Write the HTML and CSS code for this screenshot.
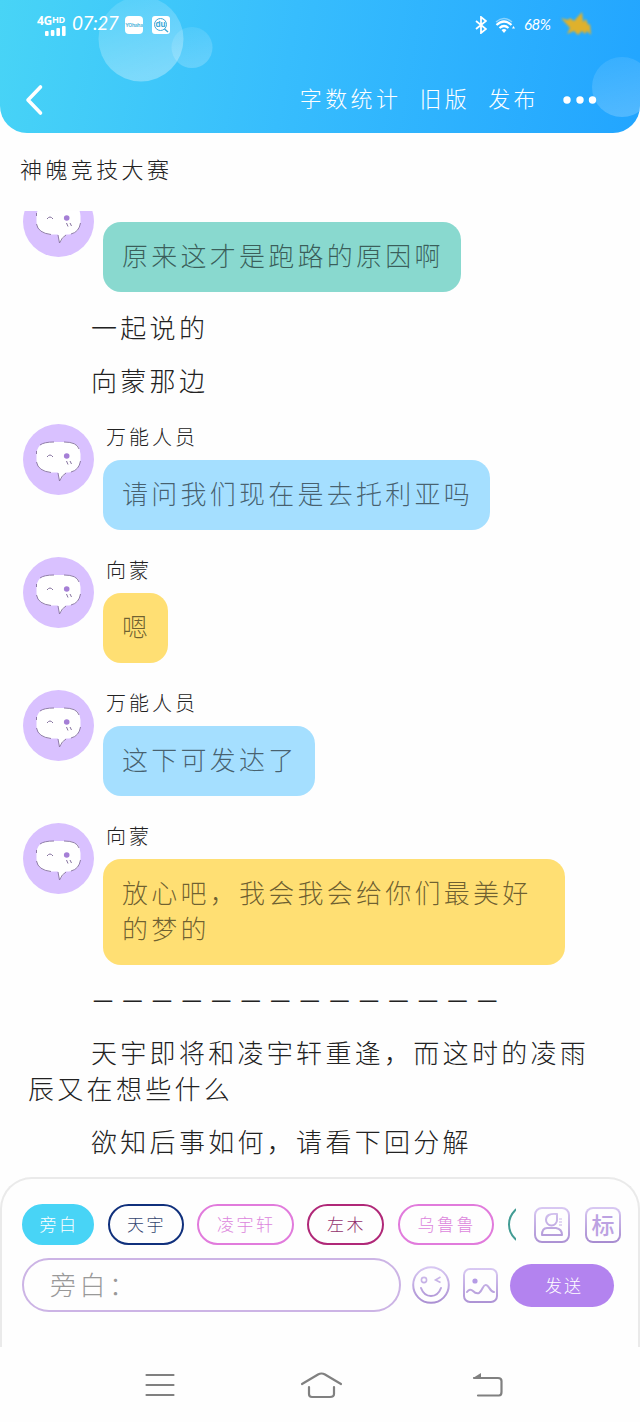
FILE: index.html
```html
<!DOCTYPE html>
<html lang="zh-CN">
<head>
<meta charset="utf-8">
<title>神魄竞技大赛</title>
<link rel="stylesheet" href="styles.css">
</head>
<body>
<svg class="defs" aria-hidden="true">
  <defs>
    <linearGradient id="violet" x1="0" y1="0" x2="0" y2="40" gradientUnits="userSpaceOnUse">
      <stop offset="0" stop-color="#d9c9f3"/><stop offset="1" stop-color="#a78bd0"/>
    </linearGradient>
    <symbol id="avatar" viewBox="0 0 71 71">
      <circle cx="35.5" cy="35.5" r="35.5" fill="#d9c1ff"/>
      <path d="M26 18H46Q57 19 57.500 30V36Q57 47 46 48.5H43L36.5 57L35 48.5H27Q14 47 13.500 36V30Q14 19 26 18Z" fill="#fff"/>
      <path d="M17 21Q21 18 31 18M41 18Q54 18 56 25M57.5 37Q56 46 48 48M13.500 38Q15 47 28 48.5M35 49L36.5 57Q39 51 43 49M13.500 30V27" fill="none" stroke="#85729e" stroke-width=".9"/>
      <path d="M24 33Q27 29 30 33M43.5 37L45 40.500M47 37L48.500 40" fill="none" stroke="#85729e" stroke-width="1"/>
      <circle cx="43.700" cy="32" r="2.800" fill="#a57fd6"/>
    </symbol>
  </defs>
</svg>
<div class="screen">
  <header class="header">
    <svg class="bubbles" viewBox="0 0 640 133" width="640" height="133">
      <defs>
        <linearGradient id="orb" x1="0" y1="0" x2="0.3" y2="1">
          <stop offset="0" stop-color="#fff" stop-opacity=".1"/><stop offset="1" stop-color="#fff" stop-opacity=".32"/>
        </linearGradient>
        <linearGradient id="orb2" x1="0" y1="0" x2="0.3" y2="1">
          <stop offset="0" stop-color="#fff" stop-opacity=".08"/><stop offset="1" stop-color="#fff" stop-opacity=".2"/>
        </linearGradient>
      </defs>
      <circle cx="141" cy="39" r="42.500" fill="url(#orb)"/>
      <circle cx="192" cy="47.500" r="20.500" fill="url(#orb2)"/>
      <circle cx="622" cy="87" r="30" fill="url(#orb2)"/>
    </svg>
    <div class="status">
      <div class="signal">
        <span class="network">4G<small>HD</small></span>
        <svg width="21" height="10" viewBox="0 0 21 10" fill="#fff"><rect y="5" width="3.600" height="5" rx="1"/><rect x="5.800" y="4" width="3.600" height="6" rx="1"/><rect x="11.400" y="2" width="3.600" height="8" rx="1"/><rect x="17" width="3.600" height="10" rx="1"/></svg>
      </div>
      <span class="clock">07:27</span>
      <span class="app-badge">YOhaha</span>
      <svg class="app-search" width="18" height="18" viewBox="0 0 18 18"><rect width="18" height="18" rx="3" fill="#fff"/><circle cx="8.500" cy="8.500" r="6" fill="none" stroke="#3ea9d8"/><path d="M12.500 13L16 16" stroke="#3ea9d8" stroke-width="1.500"/><text x="8.500" y="11.300" text-anchor="middle" class="du">du</text></svg>
      <div class="status-right">
        <svg width="12" height="18" viewBox="0 0 12 18" fill="none" stroke="#fff" stroke-width="1.800"><path d="M1 5L11 13L6 17V1L11 5L1 13"/></svg>
        <svg width="21" height="17" viewBox="0 0 21 17" fill="none" stroke="#fff" stroke-width="2.200"><path d="M1 5Q9 -2 17 5" opacity=".45" stroke-width="1.500"/><path d="M1.500 8Q9 1 16.500 8M4.500 11Q9 7 13.500 11"/><path d="M6.500 13Q9 11 11.500 13L9 16Z" fill="#fff" stroke="none"/><path d="M17 11.500L18.500 9L20 11.500Z" fill="#fff" stroke="none"/></svg>
        <span class="battery">68%</span>
        <svg class="scribble" width="34" height="28" viewBox="0 0 34 28"><path d="M1 7L8 9L10 7L14 10L22 1L23 11L26 8L28 14L30 13L31 24L27 20L25 23L22 20L18 24L14 20L7 23L10 17Z" fill="#dfb12c"/></svg>
      </div>
    </div>
    <div class="toolbar">
      <svg class="back" width="20" height="32" viewBox="0 0 20 32"><path d="M16.500 3L4 16L16.500 29" fill="none" stroke="#fff" stroke-width="3.600" stroke-linecap="round" stroke-linejoin="round"/></svg>
      <nav class="actions"><span>字数统计</span><span>旧版</span><span>发布</span></nav>
      <svg class="more" width="34" height="8" viewBox="0 0 34 8" fill="#fff"><circle cx="4" cy="4" r="3.700"/><circle cx="17" cy="4" r="3.700"/><circle cx="29.500" cy="4" r="3.700"/></svg>
    </div>
  </header>

  <h1 class="title">神魄竞技大赛</h1>

  <main class="chat">
    <div class="chat-list">
      <section class="message">
        <svg class="avatar"><use href="#avatar"/></svg>
        <div class="body"><div class="name"></div><p class="bubble teal">原来这才是跑路的原因啊</p></div>
      </section>
      <p class="narration">一起说的</p>
      <p class="narration">向蒙那边</p>
      <section class="message">
        <svg class="avatar"><use href="#avatar"/></svg>
        <div class="body"><div class="name">万能人员</div><p class="bubble blue">请问我们现在是去托利亚吗</p></div>
      </section>
      <section class="message">
        <svg class="avatar"><use href="#avatar"/></svg>
        <div class="body"><div class="name">向蒙</div><p class="bubble yellow">嗯</p></div>
      </section>
      <section class="message">
        <svg class="avatar"><use href="#avatar"/></svg>
        <div class="body"><div class="name">万能人员</div><p class="bubble blue">这下可发达了</p></div>
      </section>
      <section class="message">
        <svg class="avatar"><use href="#avatar"/></svg>
        <div class="body"><div class="name">向蒙</div><p class="bubble yellow">放心吧，我会我会给你们最美好的梦的</p></div>
      </section>
      <p class="narration dashes">——————————————</p>
      <p class="narration">天宇即将和凌宇轩重逢，而这时的凌雨辰又在想些什么</p>
      <p class="narration">欲知后事如何，请看下回分解</p>
    </div>
  </main>

  <footer class="composer">
    <div class="roles-row">
      <div class="roles">
        <span class="chip active">旁白</span>
        <span class="chip navy">天宇</span>
        <span class="chip pink">凌宇轩</span>
        <span class="chip wine">左木</span>
        <span class="chip pink">乌鲁鲁</span>
        <span class="chip green"></span>
      </div>
      <svg class="tool" width="36" height="36" viewBox="0 0 36 36" fill="none" stroke="url(#violet)" stroke-width="2"><rect x="1" y="1" width="34" height="34" rx="7"/><path d="M23 7Q12 6 12 13A5.500 5.500 0 0 0 23 13ZM13 21H22Q28 22 28 28H8Q8 21 13 21Z" stroke-linejoin="round"/><path d="M25 12H28M25 15H28M25 18H28" stroke-width="1.200"/></svg>
      <div class="tag-tool"><span>标</span></div>
    </div>
    <div class="input-row">
      <div class="input">旁白：</div>
      <svg class="smile" width="38" height="38" viewBox="0 0 38 38" fill="none" stroke="url(#violet)" stroke-width="2"><circle cx="19" cy="19" r="17.800"/><circle cx="12" cy="14" r="2.600" stroke-width="1.600"/><path d="M28.500 11L23.500 14L28.500 16.500" stroke-width="1.600"/><path d="M9 22Q12 30 19 30T29 22" stroke-linecap="round"/></svg>
      <svg class="picture" width="35" height="35" viewBox="0 0 35 35" fill="none" stroke="url(#violet)" stroke-width="2"><rect x="1" y="1" width="33" height="33" rx="6"/><circle cx="12" cy="13" r="2.600" fill="#b59be5" stroke="none"/><path d="M4 24Q7 20 10 23T16 25C20 22 20 16 23 17C26 17 27 24 31 24" stroke-linecap="round"/></svg>
      <button class="send">发送</button>
    </div>
  </footer>

  <nav class="navbar">
    <svg width="30" height="24" viewBox="0 0 30 24" fill="none" stroke="#808080" stroke-width="2.200" stroke-linecap="round"><path d="M1.500 2H28.500M1.500 12H28.500M1.500 22H28.500"/></svg>
    <svg class="home" width="43" height="28" viewBox="0 0 43 28" fill="none" stroke="#808080" stroke-width="2.200" stroke-linecap="round"><path d="M2 13L18 3.500Q21.500 1.500 25 3.500L41 13M9 16V23Q9 26 12 26H30Q34 26 34 23V16"/></svg>
    <svg width="32" height="26" viewBox="0 0 32 26" fill="none" stroke="#808080" stroke-width="2.200" stroke-linecap="round"><path d="M2 6H26Q29.500 6 29.500 9V20Q29.500 23.500 27 23.500H6"/><path d="M1 6L9 1V6Z" fill="#808080" stroke="none"/></svg>
  </nav>
</div>
</body>
</html>
```
FILE: styles.css
```css
* { box-sizing: border-box; margin: 0; padding: 0; }
body { background: #fff; font-family: "Noto Sans CJK SC", sans-serif; font-weight: 300; color: #222; }
svg { display: block; flex: none; }
.defs { position: absolute; width: 0; height: 0; }
.screen { width: 640px; height: 1422px; display: flex; flex-direction: column; overflow: hidden; background: #fefefe; }

.header { position: relative; flex: none; height: 133px; border-radius: 0 0 27px 27px; overflow: hidden; color: #fff; background: linear-gradient(100deg, #48d4f6 0%, #37bdfd 45%, #22a5ff 100%); }
.bubbles { position: absolute; top: 0; left: 0; }
.status { position: relative; display: flex; align-items: center; height: 50px; padding: 0 46px 0 37px; }
.signal { width: 29px; display: flex; flex-direction: column; align-items: flex-end; }
.network { font: 700 12px/11px "Open Sans", sans-serif; width: 29px; white-space: nowrap; letter-spacing: -0.3px; }
.network small { font-size: 9px; vertical-align: 2px; }
.clock { width: 53px; margin-left: 6px; padding-bottom: 4px; font: italic 400 19px/24px Lato, sans-serif; letter-spacing: -0.5px; white-space: nowrap; }
.app-badge { width: 18px; height: 18px; border-radius: 4px; background: #fff; color: #58b9dc; font: 700 5px/18px Inter, sans-serif; text-align: center; letter-spacing: -0.3px; overflow: hidden; }
.app-search { margin-left: 9px; }
.du { font: 700 8px Inter, sans-serif; fill: #3ea9d8; }
.status-right { margin-left: auto; display: flex; align-items: center; gap: 8px; }
.battery { width: 28px; padding-bottom: 3px; font: italic 400 15px/20px Lato, sans-serif; letter-spacing: -0.5px; white-space: nowrap; }
.scribble { margin-left: 0; filter: blur(1px); }
.toolbar { position: relative; display: flex; align-items: center; height: 98px; margin-top: 1px; padding: 0 43px 0 24px; }
.actions { margin-left: auto; display: flex; gap: 18px; padding-bottom: 7px; font-size: 22px; line-height: 30px; letter-spacing: 3.400px; }
.more { margin-left: 24px; }

.title { flex: none; height: 78px; padding: 17px 20px 0; font-size: 22px; line-height: 36px; font-weight: 300; letter-spacing: 3.400px; }

.chat { flex: none; height: 966px; overflow: hidden; }
.chat-list { margin-top: -25px; display: flex; flex-direction: column; }
.message { display: flex; gap: 9px; padding-left: 23px; margin-top: 27px; }
.message:first-child { margin-top: 0; }
.narration + .message { margin-top: 26px; }
.avatar { width: 71px; height: 71px; }
.name { height: 36px; padding-left: 3px; font-size: 20px; line-height: 25px; letter-spacing: 3px; }
.bubble { width: fit-content; max-width: 462px; padding: 15px 17px 19px 19px; border-radius: 18px; font-size: 26px; line-height: 36px; letter-spacing: 3.250px; color: rgba(0, 0, 0, .58); }
.teal { background: #89d9cf; }
.blue { background: #a5dfff; }
.yellow { background: #ffdf73; }
.narration { margin-top: 17px; padding: 0 30px 0 28px; text-indent: 63px; font-size: 26px; line-height: 35.800px; letter-spacing: 3.300px; }
.dashes { padding-left: 30px; font-family: "Noto Sans", sans-serif; font-size: 20px; font-weight: 400; letter-spacing: 9.550px; white-space: nowrap; }

.composer { flex: none; height: 170px; padding: 25px 16px 0 20px; border: 2px solid #eaeaea; border-bottom: 0; border-radius: 32px 32px 0 0; }
.roles-row { display: flex; align-items: center; }
.roles { display: flex; gap: 13.500px; width: 494px; overflow: hidden; }
.chip { flex: none; height: 41px; padding: 0 0 0 2px; border: 2px solid; border-radius: 21px; font-size: 17px; line-height: 36px; letter-spacing: 2.500px; text-align: center; white-space: nowrap; }
.active { width: 72px; color: #fff; background: #48d4f6; border-color: #48d4f6; }
.navy { width: 76px; border-color: #10307c; color: #33456e; }
.pink { width: 96.500px; border-color: #e17bdc; color: #dc85dc; }
.wine { width: 77px; border-color: #b02878; color: #93306c; }
.green { width: 77px; border-color: #429c94; }
.tool { margin-left: 18px; }
.tag-tool { width: 36px; height: 36px; margin-left: 15px; padding: 2px; border-radius: 8px; background: linear-gradient(#d9c9f3, #a78bd0); }
.tag-tool span { display: block; height: 32px; border-radius: 6px; background: #fefefe; color: #bca2e2; font-size: 23px; line-height: 31px; font-weight: 500; text-align: center; }
.input-row { display: flex; align-items: center; margin-top: 13px; }
.input { width: 379px; height: 54px; padding-left: 26px; border: 2px solid #ccb4e5; border-radius: 27px; font-size: 26px; line-height: 48px; letter-spacing: 3.500px; color: #999; }
.smile { margin-left: 11px; }
.picture { margin-left: 13px; }
.send { width: 104px; height: 43px; margin-left: 12px; border: 0; border-radius: 22px; background: #b383ef; color: #fff; font: 300 17px/40px "Noto Sans CJK SC", sans-serif; letter-spacing: 2px; padding-left: 4px; }

.navbar { flex: 1; display: flex; align-items: center; justify-content: space-between; padding: 0 136px 0 145px; }
.home { margin-right: 5px; }
```
